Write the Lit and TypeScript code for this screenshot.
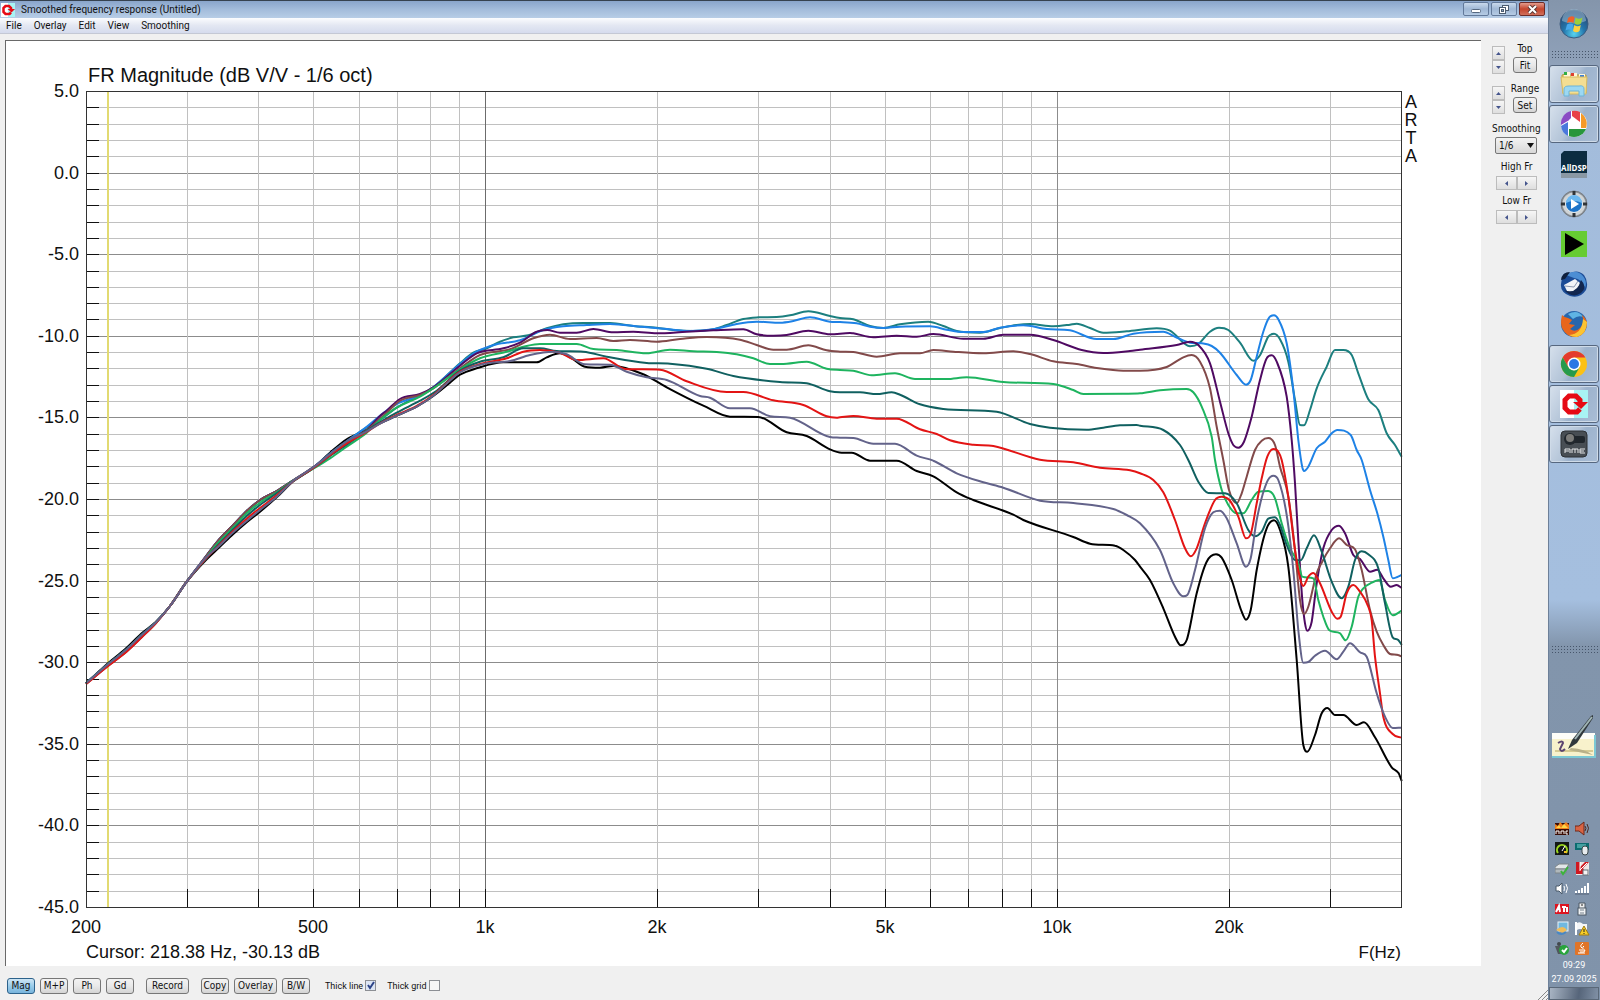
import { LitElement, html, svg, css, type SVGTemplateResult } from "lit";
import { customElement, property, state } from "lit/decorators.js";
import { classMap } from "lit/directives/class-map.js";

type Point = [number, number];

interface Trace {
  name: string;
  color: string;
  strips: Array<[string, string]>;
}

/* Origins of the strips in which trace samples are stored (three units per plot pixel). */
const STRIPS: Record<string, Point> = {
  low: [80, 380],
  mid: [460, 300],
  high: [840, 300],
  top: [1140, 300],
  end: [1140, 460],
  tail: [1260, 480],
};

const START = "18,910 84,853 135,812 185,765 228,727 270,678 320,605 ";
const START_HIGH = "18,910 84,850 135,808 185,760 228,725 270,678 320,605 ";
const START_LOW = "18,912 84,858 135,819 185,772 228,729 270,678 320,605 ";
const UPPER = START + "375,533 410,487 460,435 500,393 540,360 590,333 640,301 700,262 ";
const LOWER = START_HIGH + "380,538 415,505 460,462 500,427 540,395 590,352 640,304 700,264 ";

const TRACES: Trace[] = [
  { name: "60 deg", color: "#000000", strips: [
    ["low", LOWER + "750,218 800,178 860,150 900,130 950,107 1010,80 1060,48 1110,8"],
    ["mid", "0,224 50,205 130,187 230,187 260,172 300,160 335,175 375,200 420,203 460,198 550,223 620,262 730,317 810,350 895,351 980,397 1040,408 1110,448 1145,458"],
    ["high", "35,458 90,482 170,482 230,513 280,529 350,577 400,600 520,644 550,660 700,711 750,731 825,737 850,750 885,780"],
    ["end", "0,320 30,360 70,445 105,530 122,556 140,540 170,400 200,305 228,283 245,293 275,360 305,455 318,479 332,450 350,330 380,205 402,181 420,210 445,320"],
    ["tail", "110,540 130,795 142,815 165,765 185,700 202,684 225,705 250,705 290,735 312,727 345,772 395,862 416,880 425,903"]] },
  { name: "0 deg", color: "#1c7f7f", strips: [
    ["low", UPPER + "750,221 800,184 860,142 900,120 950,83 1020,46 1060,22"],
    ["mid", "0,190 40,158 80,145 120,125 160,112 205,106 260,85 310,73 370,69 450,69 520,78 590,83 640,90 700,93 760,88 800,75 850,57 895,52 950,51 990,46 1045,34 1110,48"],
    ["high", "0,54 40,58 90,78 130,84 180,73 265,65 310,78 350,93 420,98 480,84 530,75 570,72 640,79 690,74 710,71 750,84 790,98 860,94"],
    ["top", "50,85 90,92 150,139 175,132 210,95 237,83 265,90 300,128 340,182 360,166 385,110 402,101 420,118 445,185 465,300 480,375 492,376 510,330 530,265 560,200 585,150 610,150 635,165 655,220 685,298 715,330 740,400 765,435 785,470"]] },
  { name: "10 deg", color: "#1e82e6", strips: [
    ["low", UPPER + "750,221 800,184 860,140 900,107 950,72 1020,46 1060,22"],
    ["mid", "0,192 50,155 110,133 180,121 250,90 310,79 380,75 450,72 540,80 610,86 690,93 760,88 830,72 890,65 960,68 1000,63 1050,52 1110,65"],
    ["high", "0,66 50,70 90,80 130,84 180,80 270,79 320,89 370,96 430,96 480,83 550,76 620,87 690,91 770,117 820,117 880,101"],
    ["top", "70,95 105,110 150,128 185,130 215,138 240,158 290,225 318,254 332,240 350,170 370,95 388,52 402,46 415,58 440,130 460,270 475,420 487,502 492,513 505,500 530,445 555,425 575,400 592,390 632,405 650,450"],
    ["end", "665,0 690,90 712,160 730,230 745,300 758,355 770,352 785,345"]] },
  { name: "20 deg", color: "#4f0a62", strips: [
    ["low", UPPER + "750,223 800,186 860,150 900,108 920,92 960,57 1020,42 1060,22"],
    ["mid", "0,197 50,160 130,145 180,128 230,95 262,90 300,98 350,98 400,87 460,97 520,95 590,100 680,95 760,91 850,88 890,103 940,107 980,105 1045,92 1110,103 1170,99"],
    ["high", "40,100 100,112 170,107 230,110 280,102 370,116 430,116 490,104 570,104 640,120 725,150 790,159 870,153"],
    ["top", "0,149 110,135 150,125 175,135 210,190 240,305 265,400 280,435 295,443 312,425 335,350 360,240 380,175 395,166 410,185 440,290 455,420"],
    ["end", "465,70 475,240 487,420 495,490 502,512 515,485 530,370 550,265 575,210 597,197 615,220 640,285 660,297 690,335 712,329 730,355 752,380 770,375 785,384"]] },
  { name: "25 deg", color: "#824a4a", strips: [
    ["low", START_LOW + "375,533 410,487 460,435 500,393 540,360 590,333 640,301 700,262 750,225 800,188 860,150 920,98 960,62 1020,45 1060,25"],
    ["mid", "0,205 60,165 150,148 220,115 270,104 330,117 410,114 460,123 510,120 590,125 660,117 740,111 840,119 890,135 940,149 980,149 1045,136 1100,151 1140,155"],
    ["high", "40,156 110,170 180,160 240,160 280,150 340,155 430,160 520,154 570,162 640,184 710,192 770,204 850,212"],
    ["top", "0,212 80,201 130,172 155,165 180,185 210,265 230,380 250,480"],
    ["end", "267,90 290,130 305,100"],
    ["top", "320,530 345,450 365,422 385,414 405,435"],
    ["end", "420,20 445,110 465,270 480,420 492,462 505,440 530,340 545,308 570,265 597,235 620,255 645,268 665,330 690,450 710,515"],
    ["tail", "370,495 390,522 415,525 425,530"]] },
  { name: "30 deg", color: "#1eb45f", strips: [
    ["low", START + "377,535 412,491 460,442 500,400 540,368 590,337 640,302 700,266 750,235 800,200 860,158 900,120 950,83 1020,50 1070,18"],
    ["mid", "0,208 60,175 140,155 200,138 240,132 350,132 400,147 470,150 560,160 630,149 700,154 770,156 830,163 880,175 930,192 980,191 1040,185 1100,206 1140,210"],
    ["high", "40,212 95,226 165,220 225,237 320,237 380,232 490,246 640,252 700,270 730,282 850,281"],
    ["top", "0,280 60,271 140,267 160,277 185,320 215,410"],
    ["end", "225,0 245,90 265,135 290,160 310,160 335,120 355,95 385,93 405,115 425,190 450,265 475,310 487,350 520,355 535,420 550,470 568,511 600,520 617,541 635,500 655,410 670,385 695,368 718,360 735,420 758,466 785,452"]] },
  { name: "35 deg", color: "#106060", strips: [
    ["low", START + "377,538 412,497 460,448 500,408 540,375 590,340 640,303 700,264 750,228 800,194 860,152 900,127 950,98 1020,62 1070,32"],
    ["mid", "0,212 60,185 130,172 190,145 240,145 290,153 370,155 440,170 560,189 630,191 740,206 820,228 960,246 1040,250 1110,274"],
    ["high", "0,277 60,277 110,282 155,277 180,284 240,313 310,327 470,335 570,372 630,383 740,389 790,383 840,376 890,375"],
    ["top", "0,377 70,390 120,435"],
    ["end", "145,0 175,65 205,99 255,100 290,130 325,210 345,229 365,215 385,176 405,172 420,195 440,255 465,300 482,301 500,265 522,226 545,275 575,365 605,415 625,380 645,300 665,274 685,283 715,325 735,430 758,532 775,540 785,555"]] },
  { name: "40 deg", color: "#e31414", strips: [
    ["low", START_LOW + "378,535 413,500 460,453 500,416 540,384 590,346 640,303 700,264 750,226 800,190 860,156 900,130 950,105 1010,78 1060,45"],
    ["mid", "0,215 70,190 140,175 190,155 240,150 300,158 350,180 430,175 495,207 600,209 680,244 800,276 850,276 940,301 1030,315 1100,349 1130,353"],
    ["high", "0,352 40,348 110,356 170,356 240,388 290,402 330,421 400,434 460,438 600,479 700,487 780,503 870,511"],
    ["end", "0,40 40,60 70,97 105,180 135,265 152,289 170,265 195,190 225,120 245,110 268,120 295,170 318,235 332,222 350,130"],
    ["top", "365,535 382,470 400,447 415,455"],
    ["end", "425,0 445,110 465,270 480,355 490,378 505,350 520,339 540,370 575,455 592,476 602,470 620,400 640,375 660,395 685,440 695,480"],
    ["tail", "345,530 360,640 370,710 398,762 425,773"]] },
  { name: "50 deg", color: "#63638a", strips: [
    ["low", START + "380,530 415,500 460,457 500,423 540,390 590,350 640,302 700,262 750,222 800,184 860,154 900,131 950,107 1010,80 1060,47"],
    ["mid", "0,217 70,192 150,183 210,165 280,155 320,163 375,193 450,194 500,215 560,232 620,240 720,288 750,293 810,325 870,325 930,349 990,353 1110,411"],
    ["high", "0,413 40,414 100,431 165,431 230,467 280,482 350,520 430,547 490,563 600,602 700,609 820,627 860,645"],
    ["end", "0,190 60,270 100,370 130,409 142,405 165,330 195,205 220,157 240,152 260,175 290,250 318,320 332,295 350,180 380,68 400,47 415,60 440,165 460,330"],
    ["tail", "115,450 130,548 145,546 165,527 195,512 230,538 250,515 270,490 300,517 320,530 350,640 375,710 398,744 425,743"]] },
];

function samples(trace: Trace): Point[] {
  const all: Point[] = trace.strips.flatMap(([key, text]) => {
    const [ox, oy] = STRIPS[key];
    return text.trim().split(/\s+/).map((pair): Point => {
      const [x, y] = pair.split(",").map(Number);
      return [ox + x / 3, oy + y / 3];
    });
  });
  all.sort((a, b) => a[0] - b[0]);
  return all.filter((p, i) => i === 0 || p[0] - all[i - 1][0] >= 1.5);
}

/* Monotone cubic path: smooth, with no overshoot at peaks and notches. */
function smoothPath(points: Point[]): string {
  const n = points.length;
  const slope: number[] = [];
  for (let i = 0; i < n - 1; i++) {
    slope.push((points[i + 1][1] - points[i][1]) / (points[i + 1][0] - points[i][0]));
  }
  const tangent = points.map((_, i) => {
    if (i === 0) return slope[0];
    if (i === n - 1) return slope[n - 2];
    const a = slope[i - 1];
    const b = slope[i];
    if (a * b <= 0) return 0;
    const limit = 3 * Math.min(Math.abs(a), Math.abs(b));
    return Math.sign(a) * Math.min(Math.abs(a + b) / 2, limit);
  });
  let d = `M${points[0][0].toFixed(1)} ${points[0][1].toFixed(1)}`;
  for (let i = 0; i < n - 1; i++) {
    const [x0, y0] = points[i];
    const [x1, y1] = points[i + 1];
    const h = (x1 - x0) / 3;
    d += `C${(x0 + h).toFixed(1)} ${(y0 + tangent[i] * h).toFixed(1)} ${(x1 - h).toFixed(1)} ${(y1 - tangent[i + 1] * h).toFixed(1)} ${x1.toFixed(1)} ${y1.toFixed(1)}`;
  }
  return d;
}

const PLOT = { left: 86, right: 1401, top: 91, bottom: 907 };
const freqX = (hz: number) =>
  Math.round(PLOT.left + ((PLOT.right - PLOT.left) * Math.log10(hz / 200)) / Math.log10(200));
const dbY = (db: number) => Math.round(PLOT.top + ((5 - db) * (PLOT.bottom - PLOT.top)) / 50);

@customElement("response-chart")
export class ResponseChart extends LitElement {
  static styles = css`
    :host { display: block; flex: 1; min-width: 0; min-height: 0; background: #fff; border-top: 1px solid #696969; border-left: 1px solid #696969; }
    .plot { display: block; width: 100%; height: 100%; font-family: "Liberation Sans", Arial, sans-serif; font-size: 18px; fill: #101010; }
    .line { stroke: #c0c0c0; }
    .major { stroke: #8c8c8c; }
    .kilo { stroke: #6c6c6c; }
    .tick { stroke: #111; }
    .frame { fill: none; stroke: #333; }
    .cursor { stroke: #e2da72; stroke-width: 2; }
    .trace { fill: none; stroke-width: 2; stroke-linejoin: round; }
    .caption { font-size: 20px; }
    .unit { font-size: 17px; }
    .right { text-anchor: end; }
    .centre { text-anchor: middle; }
  `;

  private static decade = [300, 400, 500, 600, 700, 800, 900, 1000, 2000, 3000, 4000, 5000, 6000, 7000, 8000, 9000, 10000, 20000, 30000];
  private static labels: Array<[number, string]> = [[200, "200"], [500, "500"], [1000, "1k"], [2000, "2k"], [5000, "5k"], [10000, "10k"], [20000, "20k"]];

  render() {
    const freqs = ResponseChart.decade;
    const levels = Array.from({ length: 49 }, (_, i) => 4 - i);
    const hline = (x1: number, x2: number, y: number, name: string): SVGTemplateResult =>
      svg`<line class=${name} x1=${x1} x2=${x2} y1=${y + 0.5} y2=${y + 0.5}></line>`;
    const vline = (x: number, y1: number, y2: number, name: string): SVGTemplateResult =>
      svg`<line class=${name} x1=${x + 0.5} x2=${x + 0.5} y1=${y1} y2=${y2}></line>`;
    return html`
      <svg class="plot" viewBox="6 41 1475 925" preserveAspectRatio="xMinYMin meet" role="img" aria-label="Frequency response magnitude">
        ${levels.map((db) => hline(PLOT.left, PLOT.right, dbY(db), db % 5 === 0 ? "major" : "line"))}
        ${freqs.map((hz) => vline(freqX(hz), PLOT.top, PLOT.bottom, hz === 1000 ? "kilo" : hz === 10000 ? "major" : "line"))}
        <line class="cursor" x1="108" x2="108" y1="92" y2="907"></line>
        ${levels.map((db) => hline(PLOT.left, PLOT.left + 13, dbY(db), "tick"))}
        ${freqs.map((hz) => vline(freqX(hz), PLOT.bottom - 18, PLOT.bottom, "tick"))}
        ${TRACES.map((t) => svg`<path class="trace" stroke=${t.color} d=${smoothPath(samples(t))}></path>`)}
        <rect class="frame" x="86.5" y="91.5" width="1315" height="816"></rect>
        <text class="caption" x="88" y="82">FR Magnitude (dB V/V - 1/6 oct)</text>
        ${Array.from({ length: 11 }, (_, i) => 5 - 5 * i).map(
          (db) => svg`<text class="right" x="79" y=${dbY(db) + 6}>${db.toFixed(1)}</text>`)}
        ${ResponseChart.labels.map(([hz, label]) => svg`<text class="centre" x=${freqX(hz)} y="933">${label}</text>`)}
        ${["A", "R", "T", "A"].map((c, i) => svg`<text class="centre" x="1411" y=${108 + i * 18}>${c}</text>`)}
        <text x="86" y="958">Cursor: 218.38 Hz, -30.13 dB</text>
        <text class="right unit" x="1401" y="958">F(Hz)</text>
      </svg>`;
  }
}

const windowsFlag = (x: number, y: number, s: number) => svg`
  <g transform="translate(${x} ${y}) scale(${s})">
    <path d="M1 3Q4 0 7.500 2L6.500 8Q3.500 6 0 8Z" fill="#f0602a"></path>
    <path d="M8.500 2.500Q12 5 15.500 2.500L14 8.500Q11 11 7.500 8.500Z" fill="#9ccf3c"></path>
    <path d="M0 9.500Q3.500 7.500 6.300 9.500L5 15.500Q2 13.500-1.500 15.500Z" fill="#48a8ec"></path>
    <path d="M7.300 10Q10.500 12.500 13.800 10L12.500 16Q9.500 18.500 6 16Z" fill="#fcd040"></path>
  </g>`;

const artaMark = svg`
  <rect width="14" height="28" fill="#fff"></rect>
  <rect x="14" width="14" height="28" fill="#a8f4f4"></rect>
  <path d="M20 19L17 22H9L5 18V10L9 6H16L20 10V13" fill="none" stroke="#e60a14" stroke-width="5"></path>
  <path d="M13 12H28L21 19Z" fill="#e60a14"></path>`;

const ICONS: Record<string, SVGTemplateResult> = {
  explorer: svg`
    <path d="M2 5L8 3L10 5H26V23H3Z" fill="#e8cf72" stroke="#b89a44"></path>
    <path d="M4 2H10V7H4ZM11 3H17V8H11ZM19 4H25V8H19Z" fill="#fff6d8"></path>
    <path d="M4 2H7V5H4Z" fill="#2fae45"></path><path d="M11 3H14V6H11Z" fill="#e04030"></path><path d="M20 5H24V7H20Z" fill="#3c80d8"></path>
    <path d="M1 7H27L26 24H3Z" fill="#f4de92" stroke="#d6ba62"></path>
    <path d="M9 16H19Q24 15 24 19V26H19V21H9V26H4V19Q4 16 9 16Z" fill="#9cd8f2" stroke="#6cb4d8"></path>`,
  picasa: svg`
    <circle cx="14" cy="14" r="13" fill="#fff"></circle>
    <path d="M11 1A13 13 0 0 0 1 15L11 9Z" fill="#8a4cc4"></path>
    <path d="M12 1A13 13 0 0 1 20 2V12L12 6Z" fill="#e84048"></path>
    <path d="M21 3A13 13 0 0 1 26 18H21Z" fill="#f59a28"></path>
    <path d="M26 19A13 13 0 0 1 9 26V19Z" fill="#28963c"></path>
    <path d="M8 26A13 13 0 0 1 1 16L8 12Z" fill="#4a78dc"></path>
    <path d="M12 7L20 13V18H9V10Z" fill="#fff"></path>`,
  alldsp: svg`
    <path d="M4 1H27V28H1V4Z" fill="#0c2c40"></path><path d="M1 23H27V28H1Z" fill="#8a98a4"></path>
    <text class="dsp" x="14" y="21">AllDSP</text>`,
  player: svg`
    <circle cx="14" cy="14" r="13" fill="#8c9298" stroke="#777d83"></circle>
    <circle cx="14" cy="14" r="11.500" fill="#d0d4d6"></circle>
    <path d="M14 1V5M14 23V27M1 14H5M23 14H27" stroke="#303438" stroke-width="3"></path>
    <circle cx="14" cy="14" r="8.500" fill="#1d74c8" stroke="#e8ecee"></circle>
    <path d="M6 13A8 8 0 0 1 22 13Q14 9 6 13Z" fill="#6cb8f0"></path>
    <path d="M11 9L19 14L11 19Z" fill="#fff"></path>`,
  green: svg`<rect x="1" y="1" width="26" height="26" fill="#66cc33"></rect><path d="M5 3L24 14L5 25Z" fill="#000"></path>`,
  thunderbird: svg`
    <path d="M2 8Q3 2 10 3Q18-1 24 5Q29 12 26 20Q20 29 10 26Q0 22 1 14Z" fill="#1c4c96"></path>
    <path d="M6 5Q14-1 21 4Q28 10 25 18Q22 9 14 8Z" fill="#4c8ed4"></path>
    <path d="M4 15L15 9L20 13L18 21L8 23Z" fill="#f2f4f8"></path>
    <path d="M5 16L14 17L18 11" fill="none" stroke="#8c98b0"></path>
    <path d="M21 10Q28 17 21 23Q12 29 4 20Q17 25 21 10Z" fill="#12264e"></path>
    <path d="M1 10Q2 2 10 2L5 9Z" fill="#10203c"></path>`,
  firefox: svg`
    <circle cx="14" cy="14" r="13" fill="#2766ac"></circle>
    <path d="M8 4Q18-1 23 7Q18 5 13 9Z" fill="#5fb4e4"></path>
    <path d="M2 5Q0 13 2 18Q7 28 17 27Q27 24 27 12Q25 7 22 5Q25 13 20 18Q15 23 10 19L15 15L9 14L12 10L8 8Q5 8 2 5Z" fill="#e8661c"></path>
    <path d="M27 12Q27 24 17 27Q12 27 9 25Q22 24 23 9Z" fill="#fcc432"></path>`,
  chrome: svg`
    <circle cx="14" cy="14" r="13" fill="#fbc116"></circle>
    <path d="M2.700 7.500A13 13 0 0 1 25.300 7.500H14L8.400 17.200Z" fill="#e33b2e"></path>
    <path d="M2.700 7.500A13 13 0 0 0 14 27L19.600 17.200L14 20.500L8.400 17.200Z" fill="#269a4c"></path>
    <circle cx="14" cy="14" r="6.500" fill="#fff"></circle><circle cx="14" cy="14" r="5" fill="#2a78e4"></circle>`,
  arta: artaMark,
  rme: svg`
    <rect x="1" y="1" width="26" height="26" rx="4" fill="#484e54" stroke="#2c3034"></rect>
    <rect x="12" y="6" width="13" height="7" rx="2" fill="#20262c"></rect>
    <circle cx="10" cy="9" r="6" fill="#22282e"></circle><circle cx="10" cy="8" r="4" fill="#7c7c7a"></circle>
    <path d="M5 23V19H10V23M5 21H9M12 23V19H18V23M15 19V23M25 19H20V23H25M20 21H24" fill="none" stroke="#e4e6e8"></path>`,
};

const TRAY: Array<[string, SVGTemplateResult]> = [
  ["RME mixer", svg`<rect y="2" width="14" height="12" fill="#3a0c04"></rect><path d="M0 8V3L3 5L5 1L8 4L11 1L14 4V8Z" fill="#f0801c"></path><path d="M1 7L4 4L6 7L9 3L13 7Z" fill="#fcd848"></path><path d="M1 13V10H4V13M6 13V10H9V13M13 10H11V13H13" fill="none" stroke="#fff"></path>`],
  ["Speaker", svg`<path d="M0 5H4L9 1V14L4 10H0Z" fill="#d86444" stroke="#702818"></path><path d="M10 5Q12 7 10 10M12 3Q15 7 12 12" fill="none" stroke="#4c2820"></path>`],
  ["GPU gauge", svg`<rect y="1" width="14" height="13" fill="#141814"></rect><path d="M3 12A5 5 0 1 1 11 12" fill="none" stroke="#9cd820" stroke-width="2"></path><path d="M7 10L10 5" stroke="#fff"></path><path d="M9 11H12" stroke="#f0c020" stroke-width="2"></path>`],
  ["Tablet", svg`<rect x="0" y="2" width="14" height="7" fill="#0c6c70"></rect><path d="M2 4H11M2 6H8" stroke="#7cd4d0"></path><rect x="7" y="5" width="6" height="9" rx="3" fill="#e8ecee" stroke="#3c484c"></rect>`],
  ["Drive", svg`<path d="M0 6L4 3H14L11 8H0Z" fill="#e2e6e8" stroke="#7c8488"></path><path d="M0 8H11V12H0Z" fill="#b0b8bc" stroke="#7c8488"></path><path d="M6 10L8 13L13 6" fill="none" stroke="#3cb43c" stroke-width="2"></path>`],
  ["Kaspersky", svg`<path d="M1 1H14V14H1Z" fill="#eee6e6"></path><path d="M1 1H5V6L10 1H14L8 7L11 13H1Z" fill="#d01820"></path><path d="M5 1V10M12 2L5 9" stroke="#fff"></path><rect x="8" y="9" width="5" height="5" fill="#f4f4f4" stroke="#687078"></rect>`],
  ["Volume", svg`<path d="M1 5H4L7 2V13L4 10H1Z" fill="#fff" stroke="#485868"></path><path d="M9 5Q10 7 9 10M11 3Q14 7 11 12" fill="none" stroke="#fff"></path>`],
  ["Network", svg`<path d="M1 12V10M4 12V9M7 12V7M10 12V5M13 12V2" stroke="#fff" stroke-width="2"></path><path d="M0 13H14" stroke="#566478"></path>`],
  ["ATI", svg`<rect y="3" width="14" height="10" fill="#dc1420"></rect><path d="M1 11L4 5L5 11M7 6H11M9 6V11M12 6V11" fill="none" stroke="#fff" stroke-width="2"></path>`],
  ["Safely remove", svg`<path d="M4 7V2H10V7" fill="#eee" stroke="#4c5864"></path><path d="M6 4H8" stroke="#222"></path><rect x="3" y="7" width="8" height="7" fill="#f0f2f4" stroke="#4c5864"></rect><path d="M5 9H9M5 12H9" stroke="#77828c"></path>`],
  ["Display", svg`<rect x="3" y="1" width="10" height="9" fill="#70b8e0" stroke="#e8f2f8"></rect><path d="M1 9Q8 3 12 9L8 12Z" fill="#f0bc58"></path><path d="M2 11Q6 15 11 11" fill="none" stroke="#4888c4" stroke-width="2"></path>`],
  ["Action centre", svg`<path d="M1 1V14" stroke="#fff" stroke-width="2"></path><path d="M2 2Q5 0 8 3H12V9H8Q5 7 2 9Z" fill="#f4f6f8"></path><path d="M9 5L14 14H4Z" fill="#f8ce28" stroke="#a07c10"></path><path d="M9 8V11M9 12V13" stroke="#222"></path>`],
  ["Device ready", svg`<circle cx="4" cy="3" r="2" fill="#42484c"></circle><path d="M0 5H8V13H3Z" fill="#50585c"></path><circle cx="9" cy="9" r="5" fill="#28a43c"></circle><path d="M7 9L9 11L12 7" fill="none" stroke="#fff" stroke-width="2"></path>`],
  ["Java", svg`<rect y="1" width="14" height="13" rx="1" fill="#e07428"></rect><path d="M8 2Q4 5 7 7M9 5Q7 6 8 8M4 9H9Q11 8 9 11H5M3 12H10" fill="none" stroke="#fff"></path>`],
];

@customElement("task-bar")
export class TaskBar extends LitElement {
  static styles = css`
    :host { display: flex; flex-direction: column; flex: none; width: 52px; box-sizing: border-box; padding-right: 1px; align-items: stretch; border-left: 1px solid #6d8099;
      background: linear-gradient(to bottom, #8495ab 0, #8fa1b9 62px, #a3bcdb 100px, #a5bfdf 600px, #8295ac 646px, #8093aa 100%);
      font-family: Roboto, "Open Sans", sans-serif; }
    button { font: inherit; border: 0; background: none; padding: 0; margin: 0; display: flex; align-items: center; justify-content: center; }
    .start { height: 48px; }
    .grip { height: 9px; margin: 2px 1px 5px 2px; background: radial-gradient(circle, #47566b 1px, transparent 1px) 0 0 / 3px 3px; }
    .task { height: 38px; margin: 1px 0; box-sizing: border-box; border: 1px solid transparent; border-radius: 3px; }
    .open { border-color: #56677f; background: linear-gradient(120deg, #d6e0ec 0, #b3c4d8 45%, #9db3cd 55%, #a9bdd6 100%); box-shadow: inset 0 0 0 1px #cfdbe8; }
    .dsp { font: bold 8px "Open Sans", sans-serif; text-anchor: middle; fill: #fff; }
    .space { flex: 1; }
    .pen { height: 48px; margin: 53px 0 58px; }
    .tray { display: grid; grid-template-columns: 20px 20px; grid-auto-rows: 20px; justify-content: center; padding-right: 4px; }
    .clock { display: flex; flex-direction: column; align-items: center; font-size: 9px; line-height: 14px; color: #fff; height: 29px; white-space: nowrap; }
    .desktop { height: 13px; border: 1px solid #5a6878; background: linear-gradient(100deg, #a9b5c4, #56657a 60%, #8191a6); }
  `;

  private tasks: Array<[string, string, boolean]> = [
    ["explorer", "Explorer", true], ["picasa", "Picasa", true], ["alldsp", "AllDSP", false], ["player", "Media player", false],
    ["green", "Player", false], ["thunderbird", "Thunderbird", false], ["firefox", "Firefox", false], ["chrome", "Chrome", true],
    ["arta", "ARTA", true], ["rme", "RME", true],
  ];

  render() {
    return html`
      <button class="start" aria-label="Start">
        <svg width="30" height="30" viewBox="0 0 30 30">
          <defs><radialGradient id="orb" cx="50%" cy="85%" r="75%"><stop offset="0" stop-color="#58d4f0"></stop><stop offset="0.500" stop-color="#2476ac"></stop><stop offset="1" stop-color="#284c78"></stop></radialGradient></defs>
          <circle cx="15" cy="15" r="14" fill="url(#orb)" stroke="#3c5c80"></circle>
          <path d="M3 12A12 12 0 0 1 27 12Q15 17 3 12Z" fill="#a8c8dc" opacity="0.500"></path>
          ${windowsFlag(8, 6, 1)}
        </svg>
      </button>
      <div class="grip"></div>
      ${this.tasks.map(([icon, label, open]) => html`
        <button class=${classMap({ task: true, open })} aria-label=${label}>
          <svg width="28" height="28" viewBox="0 0 28 28">${ICONS[icon]}</svg>
        </button>`)}
      <div class="space"></div>
      <div class="grip"></div>
      <button class="pen" aria-label="Tablet input panel">
        <svg width="46" height="46" viewBox="0 0 46 46">
          <path d="M1 20H44V44H1Z" fill="#f8f2cc"></path><path d="M1 20H44V26H1Z" fill="#fdfdf8"></path>
          <path d="M44 22V44H1" fill="none" stroke="#7cc8d4" stroke-width="2"></path><path d="M4 38H42" stroke="#b4a45c"></path>
          <path d="M7 30Q12 27 12 30L9 36Q10 40 14 36" fill="none" stroke="#5c4470" stroke-width="2"></path>
          <path d="M18 37L42 42Q34 36 20 35Z" fill="#b8b088"></path>
          <path d="M17 36L21 27L40 3L42 2L42 5L26 30Z" fill="#30383c"></path><path d="M24 26L41 4" stroke="#a0b4b4" stroke-width="2"></path>
        </svg>
      </button>
      <div class="tray">
        ${TRAY.map(([label, icon]) => html`<button aria-label=${label}><svg width="15" height="15" viewBox="0 0 15 15">${icon}</svg></button>`)}
      </div>
      <div class="clock"><span>09:29</span><span>27.09.2025</span></div>
      <button class="desktop" aria-label="Show desktop"></button>`;
  }
}

@customElement("step-pair")
export class StepPair extends LitElement {
  @property() label = "";
  @property({ type: Boolean, reflect: true }) horizontal = false;

  static styles = css`
    :host { display: flex; flex-direction: column; width: 13px; }
    :host([horizontal]) { flex-direction: row; width: 41px; }
    button { flex: 1; height: 14px; min-width: 0; box-sizing: border-box; padding: 0; border: 1px solid #bcbcbc; background: linear-gradient(#f6f6f6, #dedede); display: flex; align-items: center; justify-content: center; }
    :host(:not([horizontal])) button { flex: none; }
    .glyph { fill: #44548c; }
  `;

  render() {
    const paths = this.horizontal ? ["M4 0V5L1 2.500Z", "M1 0V5L4 2.500Z"] : ["M0 4H5L2.500 1Z", "M0 1H5L2.500 4Z"];
    return html`${paths.map((d, i) => html`
      <button aria-label="${this.label} ${i ? "next" : "previous"}"><svg width="5" height="5" viewBox="0 0 5 5"><path class="glyph" d=${d}></path></svg></button>`)}`;
  }
}

@customElement("app-root")
export class AppRoot extends LitElement {
  @state() private mode = "Mag";

  static styles = css`
    :host { display: flex; height: 100vh; overflow: hidden; background: #f0f0f0; color: #111; font-family: Roboto, "Open Sans", sans-serif; font-size: 10px; }
    .window { flex: 1; min-width: 0; display: flex; flex-direction: column; }
    .title { height: 18px; box-sizing: border-box; display: flex; align-items: center; gap: 6px; padding-left: 1px; border-top: 1px solid #36424f; background: linear-gradient(#89a5cb, #a3bcdb 50%, #b7cde6); }
    .name { flex: 1; }
    .caps { display: flex; gap: 2px; align-self: flex-start; padding: 1px 3px 0 0; }
    .cap { width: 26px; height: 14px; box-sizing: border-box; padding: 0; border: 1px solid #62799a; border-radius: 2px; background: linear-gradient(#c9d9ec, #9fb7d5 50%, #b5cbe4); display: flex; align-items: center; justify-content: center; }
    .shut { background: linear-gradient(#e39b8c, #c4442c 50%, #d0705c); border-color: #6e2c28; }
    .menu { height: 16px; box-sizing: border-box; display: flex; align-items: center; gap: 12px; padding-left: 6px; background: linear-gradient(#fbfcfe, #e3e7f2 50%, #d5dbed); border-bottom: 1px solid #c4c8d4; }
    .menu a { color: inherit; text-decoration: none; }
    .body { flex: 1; min-height: 0; display: flex; padding: 6px 0 0 5px; }
    .side { width: 56px; box-sizing: border-box; flex: none; margin-left: 11px; padding-top: 2px; font-family: "DejaVu Sans Condensed", "DejaVu Sans", sans-serif; line-height: 13px; }
    .pair { display: flex; gap: 8px; height: 31px; margin-bottom: 9px; }
    .pair step-pair { padding-top: 4px; }
    .stack { display: flex; flex-direction: column; align-items: center; gap: 2px; width: 24px; white-space: nowrap; }
    .block { display: flex; flex-direction: column; align-items: flex-start; gap: 2px; margin-bottom: 6px; }
    .indent { padding-left: 4px; width: 41px; box-sizing: content-box; align-items: center; gap: 3px; margin-bottom: 4px; }
    .push { height: 16px; box-sizing: border-box; padding: 0; color: #111; border: 1px solid #777; border-radius: 3px; background: linear-gradient(#f3f3f3, #e9e9e9 50%, #d4d4d4); font-family: "DejaVu Sans Condensed", "DejaVu Sans", sans-serif; font-size: 10px; line-height: 13px; text-align: center; }
    .small { width: 24px; }
    .on { background: linear-gradient(#cfe6f5, #9accea 50%, #78b4dc); border-color: #2c628b; }
    .pick { width: 42px; height: 17px; margin-left: 3px; box-sizing: border-box; appearance: none; border: 1px solid #777; border-radius: 2px; padding: 0 0 0 3px; font: inherit; color: inherit; background: linear-gradient(#f3f3f3, #d8d8d8); }
    .picker { display: grid; }
    .picker > * { grid-area: 1 / 1; }
    .arrow { justify-self: end; align-self: center; margin-right: 3px; pointer-events: none; }
    .tools { height: 34px; box-sizing: border-box; padding: 5px 0 0 7px; display: flex; align-items: center; }
    .set { display: flex; gap: 5px; margin-right: 12px; }
    .narrow { width: 28px; }
    .wide { width: 43px; }
    .check { display: flex; align-items: center; gap: 2px; margin: 0 8px 0 3px; font-size: 9px; }
    .check input { appearance: none; width: 11px; height: 11px; box-sizing: border-box; margin: 0; border: 1px solid #8c8f94; background: #f6f6f6; }
    .check input:checked { background: #dde6f4; }
    .box { display: grid; }
    .box > * { grid-area: 1 / 1; }
    .tickmark { pointer-events: none; }
    .resize { margin-left: auto; align-self: flex-end; }
  `;

  private modeButton = (name: string) => html`
    <button class=${classMap({ push: true, narrow: true, on: this.mode === name })} @click=${() => (this.mode = name)}>${name}</button>`;

  render() {
    return html`
      <div class="window">
        <header class="title">
          <svg width="14" height="14" viewBox="0 0 28 28">${artaMark}</svg>
          <span class="name">Smoothed frequency response (Untitled)</span>
          <div class="caps">
            <button class="cap" aria-label="Minimize"><svg width="12" height="9" viewBox="0 0 12 9"><rect x="1.500" y="4.500" width="9" height="3" rx="1" fill="#fff" stroke="#566880"></rect></svg></button>
            <button class="cap" aria-label="Restore"><svg width="12" height="11" viewBox="0 0 12 11"><rect x="4.500" y="1.500" width="6" height="5" fill="#fff" stroke="#4c5c70"></rect><rect x="1.500" y="3.500" width="6" height="6" fill="#fff" stroke="#4c5c70"></rect><rect x="3.500" y="5.500" width="2" height="2" fill="#8ca4c4" stroke="#4c5c70"></rect></svg></button>
            <button class="cap shut" aria-label="Close"><svg width="11" height="9" viewBox="0 0 11 9"><path d="M2 1L9 8M9 1L2 8" stroke="#5c3834" stroke-width="4"></path><path d="M2 1L9 8M9 1L2 8" stroke="#fff" stroke-width="2"></path></svg></button>
          </div>
        </header>
        <nav class="menu">
          ${["File", "Overlay", "Edit", "View", "Smoothing"].map((m) => html`<a href="#">${m}</a>`)}
        </nav>
        <main class="body">
          <response-chart></response-chart>
          <aside class="side">
            <div class="pair"><step-pair label="Top"></step-pair><div class="stack"><span>Top</span><button class="push small">Fit</button></div></div>
            <div class="pair"><step-pair label="Range"></step-pair><div class="stack"><span>Range</span><button class="push small">Set</button></div></div>
            <div class="block">
              <label for="smooth">Smoothing</label>
              <div class="picker">
                <select class="pick" id="smooth"><option>1/6</option></select>
                <svg class="arrow" width="7" height="5" viewBox="0 0 7 5"><path d="M0 0H7L3.500 5Z" fill="#111"></path></svg>
              </div>
            </div>
            <div class="block indent"><span>High Fr</span><step-pair horizontal label="High frequency"></step-pair></div>
            <div class="block indent"><span>Low Fr</span><step-pair horizontal label="Low frequency"></step-pair></div>
          </aside>
        </main>
        <footer class="tools">
          <div class="set">${["Mag", "M+P", "Ph", "Gd"].map(this.modeButton)}</div>
          <div class="set"><button class="push wide">Record</button></div>
          <div class="set"><button class="push narrow">Copy</button><button class="push wide">Overlay</button><button class="push narrow">B/W</button></div>
          <div class="check">
            <label for="thick-line">Thick line</label>
            <div class="box"><input id="thick-line" type="checkbox" checked />
              <svg class="tickmark" width="11" height="11" viewBox="0 0 11 11"><path d="M3 5L5 8L9 2" fill="none" stroke="#2c4488" stroke-width="2"></path></svg></div>
          </div>
          <div class="check"><label for="thick-grid">Thick grid</label><input id="thick-grid" type="checkbox" /></div>
          <svg class="resize" width="10" height="10" viewBox="0 0 10 10"><path d="M0 10L10 0M4 10L10 4M8 10L10 8" stroke="#888"></path></svg>
        </footer>
      </div>
      <task-bar></task-bar>`;
  }
}
